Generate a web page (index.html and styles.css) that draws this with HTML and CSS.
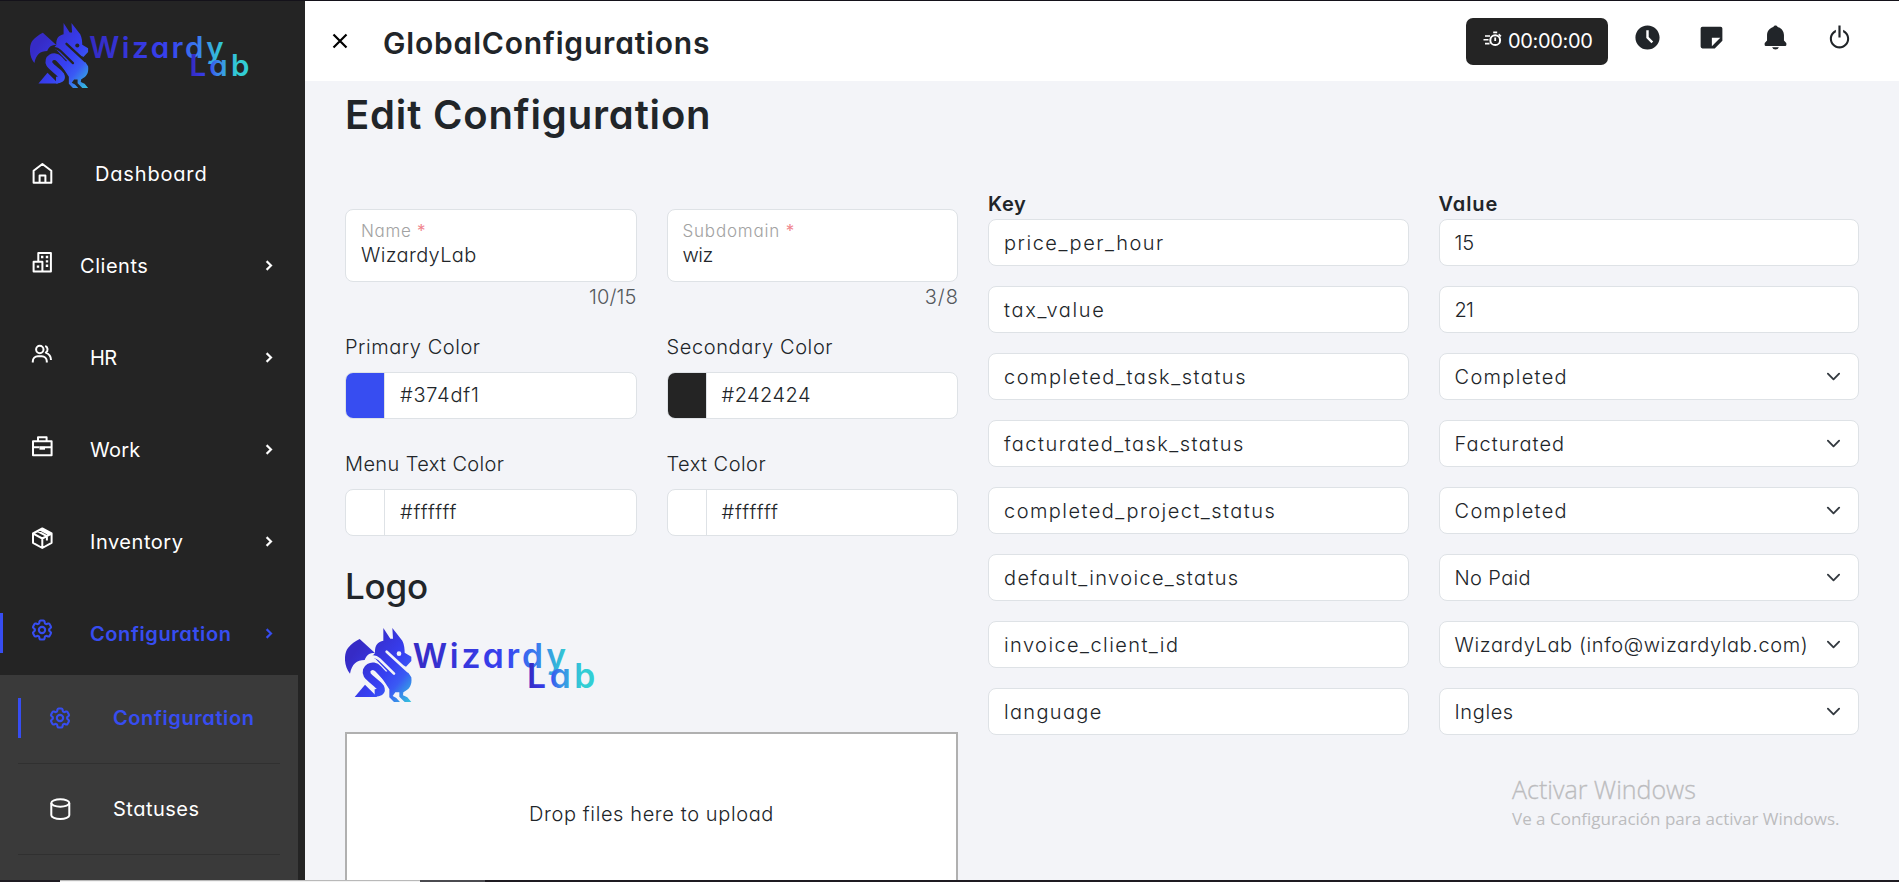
FILE: index.html
```html
<!DOCTYPE html>
<html lang="en">
<head>
<meta charset="utf-8">
<title>GlobalConfigurations</title>
<link rel="stylesheet" href="styles.css">
</head>
<body>
<svg class="defs" width="0" height="0" aria-hidden="true">
  <defs>
    <linearGradient id="gDragon" gradientUnits="userSpaceOnUse" x1="50" y1="70" x2="225" y2="215">
      <stop offset="0" stop-color="#362bc6"/><stop offset=".5" stop-color="#3740f2"/><stop offset=".7" stop-color="#3a5af4"/><stop offset="1" stop-color="#33c8dc"/>
    </linearGradient>
    <linearGradient id="gWiz" gradientUnits="userSpaceOnUse" x1="204" y1="60" x2="663" y2="120">
      <stop offset="0" stop-color="#352bc4"/><stop offset=".6" stop-color="#3741f0"/><stop offset=".8" stop-color="#3a7cee"/><stop offset="1" stop-color="#32d0d0"/>
    </linearGradient>
    <linearGradient id="gLab" gradientUnits="userSpaceOnUse" x1="553" y1="150" x2="710" y2="160">
      <stop offset="0" stop-color="#352bc4"/><stop offset=".35" stop-color="#3741f0"/><stop offset=".6" stop-color="#3a8ce8"/><stop offset="1" stop-color="#32ced4"/>
    </linearGradient>
    <mask id="cuts" maskUnits="userSpaceOnUse" x="0" y="0" width="220" height="240">
      <rect width="220" height="240" fill="#fff"/>
      <g fill="none" stroke="#000" stroke-width="8" stroke-linecap="round">
        <path d="M134 83L198 142"/>
        <path d="M70 112C88 92 103 98 112 106L156 149"/>
      </g>
      <circle cx="171" cy="89" r="7" fill="#000"/>
    </mask>
    <symbol id="logo" viewBox="0 0 750 222">
      <g transform="translate(-9 -12)" fill="url(#gDragon)">
        <path d="M53 45L99 87C82 87 74 92 68 108C44 108 30 120 24 149C6 128 4 90 18 72C27 60 40 52 53 45Z"/>
        <g mask="url(#cuts)">
          <path d="M99 87C98 62 108 54 124 50L124 12L145 44L153 44L151 12L181 50C187 62 188 76 188 86L208 98V111L192 128L184 124L208 160C211 185 202 196 184 205L183 214L196 220L208 234H188L172 218V205H160L152 216L163 222L174 234H156L142 220V196L112 150L136 142L100 104L88 99Z"/>
        </g>
        <path d="M69 182L106 219H38Z"/>
        <path d="M152 181L109 135C92 116 65 134 76 153C83 164 108 180 115 190C122 204 110 207 98 207" fill="none" stroke="url(#gDragon)" stroke-width="23"/>
      </g>
      <text class="logo-word" x="203" y="120" textLength="460" lengthAdjust="spacing" fill="url(#gWiz)">Wizardy</text>
      <text class="logo-word" x="546" y="181" textLength="205" lengthAdjust="spacing" fill="url(#gLab)">Lab</text>
    </symbol>
    <symbol id="chev-r" viewBox="0 0 24 24"><path d="M10.700 17.700L16.400 12l-5.700-5.700-1.600 1.600 4.100 4.100-4.100 4.100z" fill="currentColor"/></symbol>
    <symbol id="chev-d" viewBox="0 0 16 16"><path d="M2 5l6 6 6-6" fill="none" stroke="#343a40" stroke-width="2" stroke-linecap="round" stroke-linejoin="round"/></symbol>
    <symbol id="gear" viewBox="0 0 24 24"><g fill="none" stroke="currentColor" stroke-width="2" stroke-linejoin="round" transform="translate(-.6 -.6) scale(1.05)"><path d="M9.594 3.94c.09-.542.56-.94 1.11-.94h2.593c.55 0 1.02.398 1.11.94l.213 1.281c.063.374.313.686.645.87.074.04.147.083.22.127.325.196.72.257 1.075.124l1.217-.456a1.125 1.125 0 0 1 1.37.49l1.296 2.247a1.125 1.125 0 0 1-.26 1.431l-1.003.827c-.293.241-.438.613-.43.992a7.723 7.723 0 0 1 0 .255c-.008.378.137.75.43.991l1.004.827c.424.35.534.955.26 1.43l-1.298 2.247a1.125 1.125 0 0 1-1.369.491l-1.217-.456c-.355-.133-.75-.072-1.076.124a6.47 6.47 0 0 1-.22.128c-.331.183-.581.495-.644.869l-.213 1.281c-.09.543-.56.94-1.11.94h-2.594c-.55 0-1.019-.398-1.11-.94l-.213-1.281c-.062-.374-.312-.686-.644-.87a6.52 6.52 0 0 1-.22-.127c-.325-.196-.72-.257-1.076-.124l-1.217.456a1.125 1.125 0 0 1-1.369-.49l-1.297-2.247a1.125 1.125 0 0 1 .26-1.431l1.004-.827c.292-.24.437-.613.43-.991a6.932 6.932 0 0 1 0-.255c.007-.38-.138-.751-.43-.992l-1.004-.827a1.125 1.125 0 0 1-.26-1.43l1.297-2.247a1.125 1.125 0 0 1 1.37-.491l1.216.456c.356.133.751.072 1.076-.124.072-.044.146-.086.22-.128.332-.183.582-.495.644-.869l.214-1.28Z"/><circle cx="12" cy="12" r="3"/></g></symbol>
  </defs>
</svg>
<div class="edge-top"></div>
<div class="app">
  <aside class="sidebar">
    <svg class="brand"><use href="#logo"/></svg>
    <nav class="menu">
      <a class="item item-home">
        <svg class="ico" viewBox="0 0 24 24"><path d="M3.6 21.8V9.8L12.4 3l8.9 6.8v12zM9.6 21.8v-7.2h5.8v7.2"/></svg>
        <span class="txt home-txt">Dashboard</span>
      </a>
      <a class="item">
        <svg class="ico" viewBox="0 0 24 24"><path d="M8.3 11.6V3h12.6v18.6H3.6V11.8h8.8v9.8"/><path class="solid" d="M11 5.8h2.4v2.4H11zM15.8 5.8h2.4v2.4h-2.4zM15.8 10.2h2.4v2.4h-2.4zM15.8 14.6h2.4V17h-2.4zM6.8 15.4h2.4v2.4H6.8z"/></svg>
        <span class="txt clients-txt">Clients</span>
        <svg class="arrow"><use href="#chev-r"/></svg>
      </a>
      <a class="item">
        <svg class="ico" viewBox="0 0 24 24"><circle cx="9.8" cy="7.5" r="3.7"/><path d="M2.8 20.5v-1.3a5 5 0 0 1 5-5h4a5 5 0 0 1 5 5v1.3M15.2 4a3.7 3.7 0 0 1 .6 6.6c3 1.2 5.2 3.200 5.2 7.400"/></svg>
        <span class="txt hr-txt">HR</span>
        <svg class="arrow"><use href="#chev-r"/></svg>
      </a>
      <a class="item">
        <svg class="ico" viewBox="0 0 24 24"><path d="M3 7.200h18.600v14H3zM8 7V3.300h8.600V7M3 13.200h6.500M15 13.200h6.500"/><path class="solid" d="M9.500 12.200h5.500v3.500H9.500z"/></svg>
        <span class="txt work-txt">Work</span>
        <svg class="arrow"><use href="#chev-r"/></svg>
      </a>
      <a class="item">
        <svg class="ico" viewBox="0 0 24 24"><path d="M12.300 2.500l9.300 5v9.300l-9.300 5.200L3 16.800V7.500zM3.200 7.700l9.100 4.800 9.100-4.800M12.300 12.500V22M7.500 5.200l9.400 5v4.300M10.500 3.800l8.500 4.600"/></svg>
        <span class="txt inv-txt">Inventory</span>
        <svg class="arrow"><use href="#chev-r"/></svg>
      </a>
      <a class="item active">
        <svg class="ico"><use href="#gear"/></svg>
        <span class="txt conf-txt">Configuration</span>
        <svg class="arrow"><use href="#chev-r"/></svg>
      </a>
    </nav>
    <div class="submenu">
      <a class="sub sub-active">
        <svg class="ico"><use href="#gear"/></svg>
        <span class="conf-txt">Configuration</span>
      </a>
      <a class="sub">
        <svg class="ico" viewBox="0 0 24 24"><ellipse cx="12.300" cy="6" rx="9" ry="3.700"/><path d="M3.300 6v12.300c0 2 4 3.700 9 3.700s9-1.700 9-3.700V6"/></svg>
        <span class="stat-txt">Statuses</span>
      </a>
    </div>
  </aside>

  <div class="page">
    <header class="topbar">
      <svg class="close" viewBox="0 0 16 16"><path d="M1.500 1.500l13 13M14.500 1.500l-13 13" fill="none" stroke="#000" stroke-width="2.200"/></svg>
      <h2 class="page-title">GlobalConfigurations</h2>
      <div class="timer">
        <svg class="timer-ico" viewBox="0 0 19 16"><circle cx="12.200" cy="9.200" r="4.900" fill="none" stroke="#fff" stroke-width="2"/><path d="M10.200 0.500h4v1.700h-4zM16 2.500l2.500 2.300-1.200 1.100-2-1.800zM11.300 6.500h1.800v3.500h-1.800zM2 4.200h5v1.600H2zM0.500 8h5v1.600h-5zM2 11.800h4.500v1.600H2z" fill="#fff"/></svg>
        <span class="timer-txt">00:00:00</span>
      </div>
      <div class="tools">
        <svg viewBox="0 0 24 24"><path d="M12 2C6.486 2 2 6.486 2 12s4.486 10 10 10 10-4.486 10-10S17.514 2 12 2zm3.293 14.707L11 12.414V6h2v5.586l3.707 3.707z"/></svg>
        <svg viewBox="0 0 24 24"><path fill-rule="evenodd" d="M19.500 3h-15A1.500 1.500 0 0 0 3 4.500v15A1.500 1.500 0 0 0 4.500 21h10.200L21 14.700V4.500A1.500 1.500 0 0 0 19.500 3zM12.300 19.300v-7h7z"/></svg>
        <svg viewBox="0 0 24 24"><path d="M12 22a2.980 2.980 0 0 0 2.818-2H9.182A2.980 2.980 0 0 0 12 22zm7-7.414V10c0-3.217-2.185-5.927-5.145-6.742C13.562 2.520 12.846 2 12 2s-1.562.520-1.855 1.258C7.184 4.073 5 6.783 5 10v4.586l-1.707 1.707A.996.996 0 0 0 3 17v1a1 1 0 0 0 1 1h16a1 1 0 0 0 1-1v-1a.996.996 0 0 0-.293-.707L19 14.586z"/></svg>
        <svg viewBox="0 0 24 24"><path d="M12 21c4.411 0 8-3.589 8-8 0-3.350-2.072-6.221-5-7.411v2.023A6.200 6.200 0 0 1 18.300 13c0 3.450-2.850 6.300-6.300 6.300S5.700 16.450 5.700 13a6.200 6.200 0 0 1 3.300-5.388V5.589C6.072 6.779 4 9.650 4 13c0 4.411 3.589 8 8 8zM11.100 2h1.800v10h-1.800z"/></svg>
      </div>
    </header>

    <main class="content">
      <h1 class="heading">Edit Configuration</h1>
      <div class="columns">
        <section class="left">
          <div class="pair">
            <div class="named">
              <div class="box"><span class="cap cap-name">Name <b>*</b></span><span class="val-wl">WizardyLab</span></div>
              <span class="count c10">10/15</span>
            </div>
            <div class="named">
              <div class="box"><span class="cap cap-sub">Subdomain <b>*</b></span><span class="val-wiz">wiz</span></div>
              <span class="count c3">3/8</span>
            </div>
          </div>
          <div class="pair colors">
            <div><label class="lbl ls54">Primary Color</label><div class="field color"><i class="sw sw-primary"></i><span class="ls76">#374df1</span></div></div>
            <div><label class="lbl ls60">Secondary Color</label><div class="field color"><i class="sw sw-secondary"></i><span class="ls46">#242424</span></div></div>
            <div><label class="lbl ls38">Menu Text Color</label><div class="field color"><i class="sw"></i><span class="ls90">#ffffff</span></div></div>
            <div><label class="lbl ls46">Text Color</label><div class="field color"><i class="sw"></i><span class="ls90">#ffffff</span></div></div>
          </div>
          <h3 class="logo-title">Logo</h3>
          <svg class="logo-img"><use href="#logo"/></svg>
          <div class="drop"><span class="ls60">Drop files here to upload</span></div>
        </section>

        <section class="right">
          <div class="kv heads"><b class="ls60">Key</b><b class="ls90">Value</b></div>
          <div class="rows">
            <div class="kv"><div class="field ls150">price_per_hour</div><div class="field ls-13">15</div></div>
            <div class="kv"><div class="field ls165">tax_value</div><div class="field ls-80">21</div></div>
            <div class="kv"><div class="field ls150">completed_task_status</div><div class="field select"><span class="ls132">Completed</span><svg><use href="#chev-d"/></svg></div></div>
            <div class="kv"><div class="field ls145">facturated_task_status</div><div class="field select"><span class="ls105">Facturated</span><svg><use href="#chev-d"/></svg></div></div>
            <div class="kv"><div class="field ls145">completed_project_status</div><div class="field select"><span class="ls132">Completed</span><svg><use href="#chev-d"/></svg></div></div>
            <div class="kv"><div class="field ls135">default_invoice_status</div><div class="field select"><span class="ls38">No Paid</span><svg><use href="#chev-d"/></svg></div></div>
            <div class="kv"><div class="field ls142">invoice_client_id</div><div class="field select"><span class="ls60">WizardyLab (info@wizardylab.com)</span><svg><use href="#chev-d"/></svg></div></div>
            <div class="kv"><div class="field ls132">language</div><div class="field select"><span class="ls60">Ingles</span><svg><use href="#chev-d"/></svg></div></div>
          </div>
        </section>
      </div>
    </main>
  </div>
</div>

<div class="watermark"><p class="wm-title">Activar Windows</p><p class="wm-text">Ve a Configuración para activar Windows.</p></div>
<div class="edge-bottom"><i class="status-line"></i><i class="status-end"></i></div>
</body>
</html>
```
FILE: styles.css
```css
* { box-sizing: border-box; }
body {
  margin: 0;
  height: 882px;
  overflow: hidden;
  position: relative;
  background: #f3f4f8;
  color: #212529;
  font: 300 20px/30px Inter, "Open Sans", sans-serif;
  font-feature-settings: "cv11";
}
h1, h2, h3, p { margin: 0; }
svg { display: block; flex: none; }
.defs { position: absolute; }
.logo-word { font: 600 101px Inter, sans-serif; font-feature-settings: "cv11"; }

.edge-top { position: absolute; inset: 0 0 auto; height: 1px; background: #14121a; z-index: 3; }
.edge-bottom { position: absolute; inset: auto 0 0; height: 2px; background: #1e1b21; z-index: 3; display: flex; padding-left: 60px; }
.status-line { width: 360px; background: #f3f3f3; border-top: 1px solid #b9b9b9; }
.status-end { width: 65px; background: #4b4b50; }

.app { display: flex; height: 882px; overflow: hidden; }

/* Sidebar */
.sidebar { width: 305px; flex: none; background: #242424; color: #fff; font-weight: 400; }
.brand { width: 219px; height: 65px; margin: 23px 0 45px 30px; }
.menu { display: flex; flex-direction: column; gap: 10px; }
.item { display: flex; align-items: center; height: 82px; padding-left: 30px; padding-right: 26px; position: relative; }
.ico { width: 24px; height: 24px; fill: none; stroke: currentColor; stroke-width: 2; stroke-linejoin: round; }
.ico .solid { fill: currentColor; stroke: none; }
.item .ico { margin-bottom: 9px; }
.item-home .ico { margin-bottom: 2px; }
.arrow { width: 21px; height: 21px; margin: 0 0 2px auto; stroke: currentColor; stroke-width: .3; }
.txt { margin-left: 36px; }
.home-txt { margin-left: 41px; letter-spacing: .83px; }
.clients-txt { margin-left: 26px; letter-spacing: .54px; }
.hr-txt { letter-spacing: -.62px; }
.work-txt { letter-spacing: .25px; }
.inv-txt { letter-spacing: .54px; }
.conf-txt { letter-spacing: .6px; font-weight: 600; }
.stat-txt { letter-spacing: .49px; }
.active, .sub-active { color: #374df1; }
.active::before { content: ""; position: absolute; left: 0; top: 20px; width: 3px; height: 40px; background: #374df1; }
.submenu { width: 298px; height: 215px; background: #3a3a3a; padding: 0 18px; }
.sub { display: flex; align-items: center; gap: 41px; height: 91px; padding: 0 0 1px 30px; border-bottom: 1px solid #303030; }
.sub-active { height: 89px; padding: 0 0 2px 30px; position: relative; }
.sub-active::before { content: ""; position: absolute; left: 0; top: 23px; width: 3px; height: 40px; background: #374df1; }

/* Top bar */
.page { flex: 1; min-width: 0; }
.topbar { height: 81px; background: #fff; display: flex; align-items: flex-start; padding-right: 45px; }
.close { width: 16px; height: 16px; margin: 33px 0 0 27px; }
.page-title { font-size: 30px; line-height: 36px; font-weight: 600; letter-spacing: .82px; margin: 25px 0 0 35px; }
.timer { margin: 18px 25px 0 auto; width: 142px; height: 47px; border-radius: 7px; background: #242424; color: #fff; display: flex; align-items: center; padding-left: 17px; font-weight: 400; }
.timer-ico { width: 19px; height: 16px; margin-bottom: 5px; }
.timer-txt { letter-spacing: -.34px; margin: 0 0 1px 6px; }
.tools { display: flex; gap: 35px; margin-top: 23px; }
.tools svg { width: 29px; height: 29px; fill: #212529; }

/* Form */
.content { padding: 11px 40px 0; }
.heading { font-size: 40px; line-height: 46px; font-weight: 600; letter-spacing: .84px; margin-bottom: 51px; }
.columns { display: grid; grid-template-columns: 613px 1fr; gap: 30px; }
.left { padding-top: 20px; }
.pair { display: grid; grid-template-columns: 1fr 1fr; column-gap: 30px; }
.box { height: 73px; padding: 9px 15px; border: 1px solid #dee2e6; border-radius: 8px; background: #fff; display: flex; flex-direction: column; line-height: 24px; }
.cap { font-size: 17px; color: #a2a2a2; }
.cap b { color: #f0858e; font-weight: 400; }
.cap-name { letter-spacing: .65px; }
.cap-sub { letter-spacing: .8px; }
.val-wl { letter-spacing: .34px; }
.val-wiz { letter-spacing: -.44px; }
.count { display: block; text-align: right; color: #54585c; }
.c10 { letter-spacing: .11px; }
.c3 { letter-spacing: 1px; margin-right: -1px; }
.colors { margin-top: 20px; row-gap: 30px; }
.lbl { display: block; margin-bottom: 10px; }
.field { height: 47px; border: 1px solid #dee2e6; border-radius: 8px; background: #fff; padding: 0 15px; display: flex; align-items: center; white-space: nowrap; overflow: hidden; }
.color { padding: 0; gap: 15px; }
.color span { margin-bottom: 1px; }
.sw { width: 39px; height: 100%; border-right: 1px solid #dee2e6; }
.sw-primary { background: #374df1; }
.sw-secondary { background: #242424; }
.logo-title { font-size: 35px; line-height: 42px; font-weight: 500; letter-spacing: -.2px; margin: 29px 0 21px; }
.logo-img { width: 250px; height: 74px; }
.drop { margin-top: 30px; height: 164px; border: 2px solid #b0b0b0; background: #fff; display: flex; align-items: center; justify-content: center; }
.kv { display: grid; grid-template-columns: 1fr 1fr; gap: 30px; }
.heads b { font-weight: 600; }
.rows { display: flex; flex-direction: column; gap: 20px; }
.select { justify-content: space-between; padding-right: 17px; }
.select svg { width: 15px; height: 15px; }

/* Tracking steps */
.ls-80 { letter-spacing: -.8px; }
.ls-13 { letter-spacing: -.13px; }
.ls38 { letter-spacing: .38px; }
.ls46 { letter-spacing: .46px; }
.ls54 { letter-spacing: .54px; }
.ls60 { letter-spacing: .61px; }
.ls76 { letter-spacing: .76px; }
.ls90 { letter-spacing: .9px; }
.ls105 { letter-spacing: 1.03px; }
.ls132 { letter-spacing: 1.32px; }
.ls135 { letter-spacing: 1.35px; }
.ls142 { letter-spacing: 1.42px; }
.ls145 { letter-spacing: 1.46px; }
.ls150 { letter-spacing: 1.52px; }
.ls165 { letter-spacing: 1.65px; }

.watermark { position: absolute; left: 1512px; top: 772px; color: #bcbcbe; font-family: "Open Sans", sans-serif; z-index: 2; white-space: nowrap; }
.wm-title { font-size: 25px; line-height: 34px; font-weight: 300; -webkit-text-stroke: .3px #bcbcbe; }
.wm-text { font-size: 17px; line-height: 26px; font-weight: 400; }
```
